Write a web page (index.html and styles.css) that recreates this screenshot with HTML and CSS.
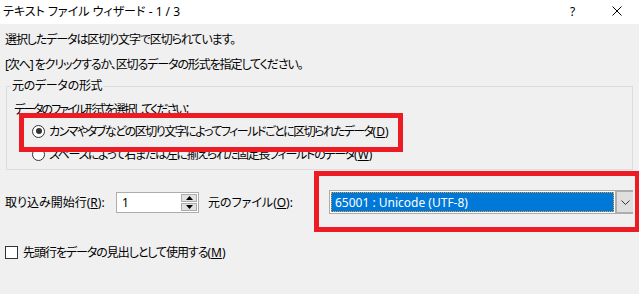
FILE: index.html
```html
<!DOCTYPE html>
<html lang="ja">
<head>
    <meta charset="UTF-8">
    <title>テキスト ファイル ウィザード - 1 / 3</title>
    <link rel="stylesheet" href="styles.css">
</head>
<body>
    <div class="window">
        <div class="titlebar">
            <span class="title">テキスト ファイル ウィザード - 1 / 3</span>
            <div class="title-buttons">
                <span class="help">?</span>
                <svg class="close" width="10" height="10" viewBox="0 0 10 10">
                    <path d="M0.5 0.5 L9.5 9.5 M9.5 0.5 L0.5 9.5" stroke="#000" stroke-width="1" fill="none"/>
                </svg>
            </div>
        </div>

        <div class="content">
            <p class="line first">選択したデータは区切り文字で区切られています。</p>
            <p class="line second">[次へ] をクリックするか、区切るデータの形式を指定してください。</p>

            <fieldset class="group">
                <legend>元のデータの形式</legend>
                <p class="line hint">データのファイル形式を選択してください：</p>
                <label class="radio-row first-radio">
                    <span class="radio checked"></span>
                    <span>カンマやタブなどの区切り文字によってフィールドごとに区切られたデータ<span class="key">(<u>D</u>)</span></span>
                </label>
                <label class="radio-row second-radio">
                    <span class="radio"></span>
                    <span>スペースによって右または左に揃えられた固定長フィールドのデータ<span class="key">(<u>W</u>)</span></span>
                </label>
            </fieldset>

            <div class="import-row">
                <span class="start-label">取り込み開始行<span class="key">(<u>R</u>):</span></span>
                <div class="spin">
                    <span class="spin-value">1</span>
                    <div class="spin-buttons">
                        <span class="spin-btn">
                            <svg width="7" height="4" viewBox="0 0 7 4"><path d="M0 4 L3.5 0 L7 4 Z" fill="#000"/></svg>
                        </span>
                        <span class="spin-btn">
                            <svg width="7" height="4" viewBox="0 0 7 4"><path d="M0 0 L3.5 4 L7 0 Z" fill="#000"/></svg>
                        </span>
                    </div>
                </div>
                <span class="origin-label">元のファイル<span class="key">(<u>O</u>):</span></span>
                <div class="combo">
                    <span class="combo-value"><span class="combo-text">65001 : Unicode (UTF-8)</span></span>
                    <span class="combo-arrow">
                        <svg width="9" height="5" viewBox="0 0 9 5"><path d="M0.5 0.5 L4.5 4.5 L8.5 0.5" stroke="#333" stroke-width="1" fill="none"/></svg>
                    </span>
                </div>
            </div>

            <label class="check-row">
                <span class="checkbox"></span>
                <span>先頭行をデータの見出しとして使用する<span class="key">(<u>M</u>)</span></span>
            </label>
        </div>

        <!-- 注釈の赤枠 -->
        <div class="mark mark-radio"></div>
        <div class="mark mark-combo"></div>
    </div>
</body>
</html>
```

FILE: styles.css
```css
body {
    margin: 0;
    padding: 0;
    background-color: #f0f0f0;
    font-family: 'Noto Sans', 'Noto Sans CJK JP', sans-serif;
    font-size: 12px;
    color: #000;
    font-feature-settings: "palt";
}

.window {
    position: relative;
    width: 639px;
    height: 294px;
    overflow: hidden;
}

.titlebar {
    display: flex;
    justify-content: space-between;
    align-items: center;
    height: 24px;
    background-color: #fff;
    padding: 0 0 0 3px;
}

.title {
    margin-top: -2px;
    white-space: pre;
}

.title-buttons {
    display: flex;
    align-items: center;
    margin-top: -2px;
}

.help {
    font-size: 12px;
    width: 12px;
    margin-right: 30px;
}

.close {
    margin-right: 17px;
}

.line {
    margin: 0;
    line-height: 16px;
    height: 16px;
    white-space: nowrap;
    letter-spacing: -1.1px;
}

.line.first {
    margin: 8px 0 0 5px;
}

.line.second {
    margin: 9px 0 0 5px;
}

.key {
    letter-spacing: 0;
}

.group {
    margin: 5px 6px 0 6px;
    padding: 0 0 7px 7px;
    border: 1px solid #dcdcdc;
    min-width: 0;
}

.group legend {
    padding: 0 1px;
    margin-left: -3px;
    line-height: 16px;
    letter-spacing: -0.3px;
}

.line.hint {
    margin-top: 8px;
    letter-spacing: -2px;
}

.radio-row {
    display: flex;
    align-items: center;
    height: 16px;
    margin: 7px 0 0 18px;
    white-space: nowrap;
}

.first-radio {
    margin-top: 5px;
    letter-spacing: -1.5px;
}

.second-radio {
    letter-spacing: -1.3px;
}

.radio {
    position: relative;
    width: 11px;
    height: 11px;
    border: 1px solid #333;
    border-radius: 50%;
    background-color: #fff;
    margin-right: 4px;
    flex-shrink: 0;
}

.radio.checked::after {
    content: "";
    position: absolute;
    left: 2.5px;
    top: 2.5px;
    width: 6px;
    height: 6px;
    border-radius: 50%;
    background-color: #333;
}

.import-row {
    display: flex;
    align-items: center;
    height: 24px;
    margin-top: 20px;
    padding-left: 5px;
}

.start-label {
    width: 111px;
    white-space: nowrap;
}

.spin {
    display: flex;
    align-items: center;
    justify-content: space-between;
    box-sizing: border-box;
    width: 83px;
    height: 21px;
    border: 1px solid #adadad;
    background-color: #fff;
}

.spin-value {
    padding-left: 5px;
}

.spin-buttons {
    display: flex;
    flex-direction: column;
    gap: 1px;
    margin-right: 1px;
}

.spin-btn {
    display: flex;
    align-items: center;
    justify-content: center;
    box-sizing: border-box;
    width: 16px;
    height: 8px;
    background-color: #e1e1e1;
    border: 1px solid #adadad;
}

.origin-label {
    width: 121px;
    margin-left: 9px;
    white-space: nowrap;
}

.combo {
    display: flex;
    box-sizing: border-box;
    width: 304px;
    height: 24px;
    border: 1px solid #adadad;
    background-color: #fff;
}

.combo-value {
    flex: 1;
    display: flex;
    align-items: center;
    margin: 1px;
    background-color: #0078d7;
    outline: 1px dotted #f0a030;
    outline-offset: -1px;
}

.combo-text {
    color: #fff;
    padding-left: 4px;
}

.combo-arrow {
    display: flex;
    align-items: center;
    justify-content: center;
    box-sizing: border-box;
    width: 18px;
    background-color: #dfdfdf;
    border: 2px solid #adadad;
    border-right: 0;
    margin: -1px -1px -1px 0;
}

.check-row {
    display: flex;
    align-items: center;
    height: 16px;
    margin-top: 30px;
    padding-left: 5px;
    white-space: nowrap;
    letter-spacing: -1.05px;
}

.checkbox {
    box-sizing: border-box;
    width: 13px;
    height: 13px;
    border: 1px solid #333;
    background-color: #fff;
    margin-right: 5px;
}

.mark {
    position: absolute;
    border: 5px solid #ed1c24;
    box-sizing: border-box;
}

.mark-radio {
    left: 19px;
    top: 113px;
    width: 384px;
    height: 39px;
}

.mark-combo {
    left: 314px;
    top: 171px;
    width: 326px;
    height: 61px;
}
```
